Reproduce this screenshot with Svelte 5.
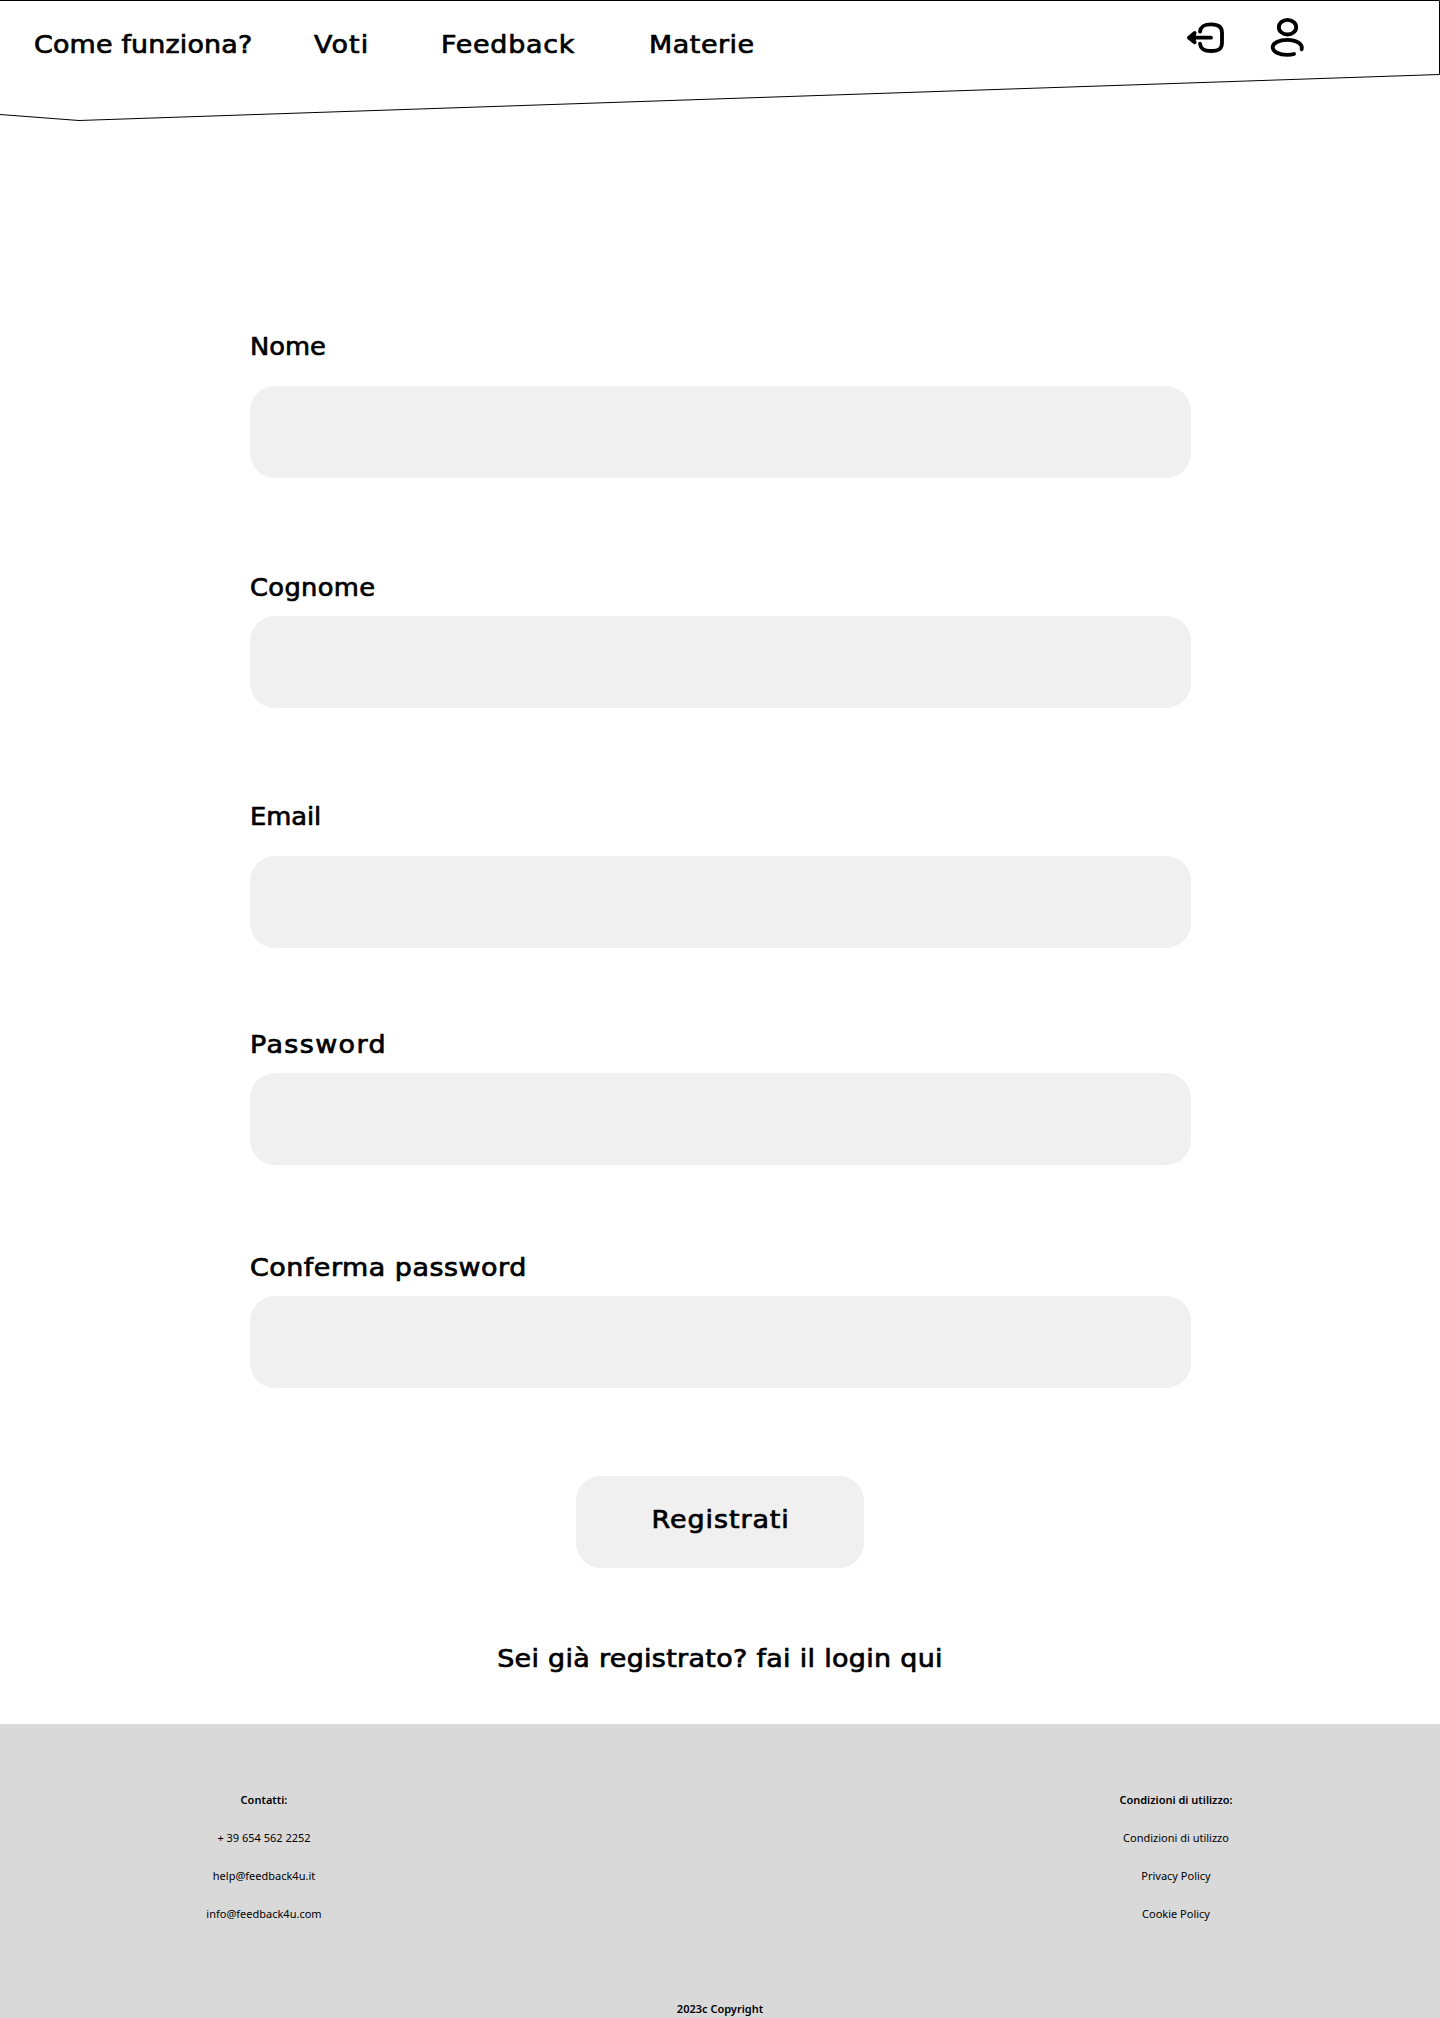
<script>
  const links = [
    { text: 'Come funziona?', name: 'come' },
    { text: 'Voti', name: 'voti' },
    { text: 'Feedback', name: 'feedback' },
    { text: 'Materie', name: 'materie' }
  ];
  const fields = [
    { id: 'nome', label: 'Nome', type: 'text' },
    { id: 'cognome', label: 'Cognome', type: 'text' },
    { id: 'email', label: 'Email', type: 'email' },
    { id: 'password', label: 'Password', type: 'password' },
    { id: 'conferma', label: 'Conferma password', type: 'password' }
  ];
  const columns = [
    { title: 'Contatti:', items: ['+ 39 654 562 2252', 'help@feedback4u.it', 'info@feedback4u.com'] },
    { title: 'Condizioni di utilizzo:', items: ['Condizioni di utilizzo', 'Privacy Policy', 'Cookie Policy'] }
  ];
</script>

<div class="page">
  <header>
    <svg class="outline" viewBox="0 0 1440 122" aria-hidden="true">
      <path d="M0 .5H1439.5V74.5L79 120.5L0 114.5" />
    </svg>
    <nav>
      {#each links as link}
        <span class="display link {link.name}">{link.text}</span>
      {/each}
    </nav>
    <div class="icons">
      <svg class="logout" viewBox="78 63 117 96" aria-label="Esci">
        <path d="M120 95C122 79 131 73 154 73C178 73 186 83 186 98V128C186 145 178 153 154 153C131 153 122 147 120 131" />
        <path d="M153 113H88M104 99L87 113L104 127" />
        <path class="tip" d="M86 113L104 99V127Z" />
      </svg>
      <svg class="user" viewBox="330 51 105 120" aria-label="Profilo">
        <ellipse cx="382.5" cy="81.5" rx="26" ry="22" />
        <path d="M425 148C429 133 410 119.5 382 119.5C357 119.5 338 129 338 142C338 155 357 164.5 382 164.5C390 164.5 397 163.5 402 162" />
      </svg>
    </div>
  </header>

  <form>
    {#each fields as field}
      <div class="field {field.id}">
        <label class="display" for={field.id}>{field.label}</label>
        <input id={field.id} type={field.type} />
      </div>
    {/each}
    <button type="button"><span class="display">Registrati</span></button>
    <p class="display login">Sei già registrato? fai il login qui</p>
  </form>

  <footer>
    <div class="columns">
      {#each columns as column}
        <div class="column">
          <strong>{column.title}</strong>
          {#each column.items as item}
            <span>{item}</span>
          {/each}
        </div>
      {/each}
    </div>
    <strong class="copyright">2023c Copyright</strong>
  </footer>
</div>

<style>
  :global(body) { margin: 0; background: #fff; }
  .page { width: 1440px; height: 2018px; display: flex; flex-direction: column; color: #000; overflow: hidden; }
  /* Widened letterforms for the display text */
  .display {
    font: 400 24px/28px "DejaVu Sans", sans-serif;
    -webkit-text-stroke: 0.7px #000;
    white-space: nowrap;
    transform: scaleX(1.12);
    transform-origin: left center;
  }

  header { position: relative; height: 122px; flex: none; display: flex; }
  .outline { position: absolute; inset: 0; width: 1440px; height: 122px; fill: none; stroke: #000; stroke-width: 1; }
  nav { display: flex; padding: 31px 0 0 34px; width: 1152px; box-sizing: border-box; }
  .come { width: 280px; letter-spacing: 0.16px; }
  .voti { width: 127px; letter-spacing: 1px; }
  .feedback { width: 208px; letter-spacing: 0.67px; }
  .materie { letter-spacing: 0.5px; }
  .icons { display: flex; align-items: flex-start; gap: 45px; padding: 17px 0 0 34px; }
  .icons svg { fill: none; stroke: #000; stroke-width: 11.5; stroke-linecap: round; stroke-linejoin: round; }
  .logout { width: 39px; height: 32px; margin-top: 4px; }
  .logout .tip { fill: #000; stroke-width: 7; }
  .user { width: 35px; height: 40px; }

  form { padding: 211px 250px 51px; display: flex; flex-direction: column; }
  .field { display: flex; flex-direction: column; align-items: flex-start; gap: 14px; }
  .nome { gap: 25px; margin-bottom: 96px; letter-spacing: 0; }
  .cognome { margin-bottom: 95px; letter-spacing: 0.35px; }
  .email { gap: 25px; margin-bottom: 83px; letter-spacing: 0; }
  .nome .display, .cognome .display, .email .display { transform: scaleX(1.07); }
  .password { margin-bottom: 89px; letter-spacing: 1.27px; }
  .conferma { margin-bottom: 88px; letter-spacing: 0.48px; }
  input { box-sizing: border-box; width: 941px; height: 92px; border: 0; border-radius: 25px; background: #f0f0f0; padding: 0 24px; font-size: 24px; }
  button { display: flex; align-items: center; justify-content: center; align-self: center; width: 288px; height: 92px; border: 0; border-radius: 25px; background: #f0f0f0; color: #000; padding: 0 0 4px 1px; }
  button .display { letter-spacing: 0.85px; transform-origin: center; }
  .login { margin: 77px 0 0; text-align: center; letter-spacing: 0.3px; transform-origin: center; }

  footer { flex: 1; background: #d9d9d9; display: flex; flex-direction: column; font: 11px/38px "Noto Sans", sans-serif; text-align: center; }
  .columns { display: flex; justify-content: space-between; padding: 57px 144px 0; }
  .column { width: 240px; display: flex; flex-direction: column; }
  strong { font-weight: 600; letter-spacing: 0; }
  .copyright { margin-top: 69px; line-height: 14px; }
</style>
